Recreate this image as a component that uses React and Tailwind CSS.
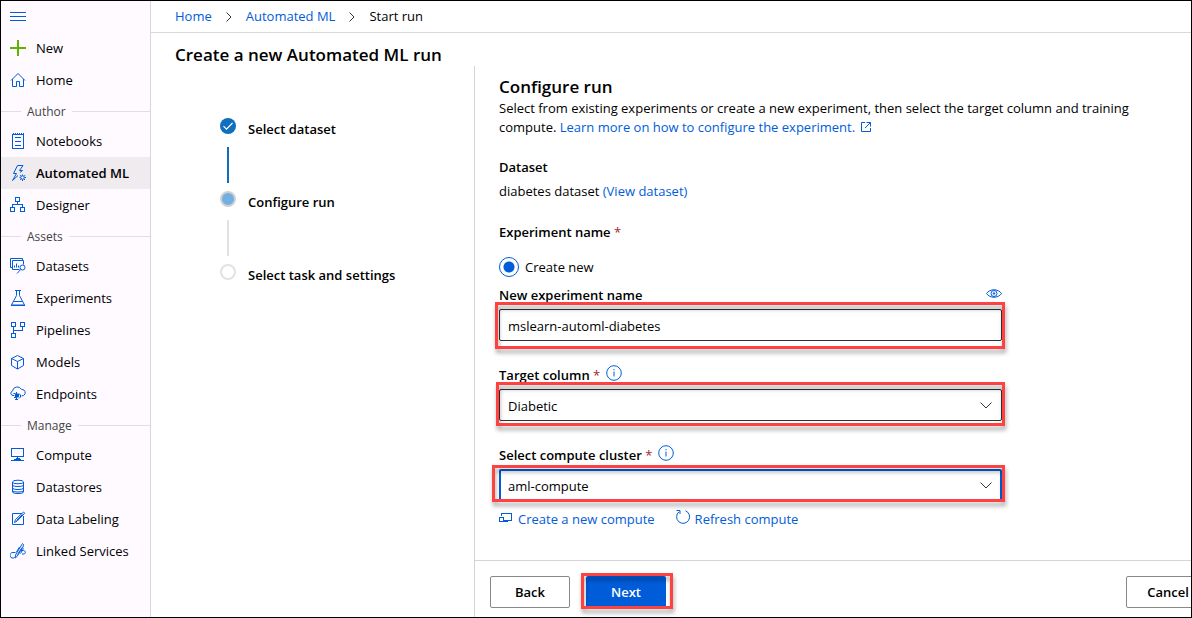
import React from "react";

const icons = {
  plus: <path d="M8 0v16M0 8h16" stroke="#5db300" strokeWidth="2" />,
  home: <path d="M1 8.500 8 1.500l7 7M2.500 7v7.500h4v-5h3v5h4V7" />,
  notebook: (
    <g shapeRendering="crispEdges">
      <path d="M2.500 1.500h11v14h-11z" />
      <path d="M5 4.500h6M5 8.500h6M5 12.500h6M3.500 0v1M5.500 0v1M7.500 0v1M9.500 0v1M11.500 0v1M13.500 0v1" />
    </g>
  ),
  automl: (
    <g>
      <path d="M10 7.500 12.500 5.500H9.500L13 .5H7.500L3.500 8.500H6.500L2.500 15.500 8 10.500" />
      <circle cx="12.500" cy="12.500" r="1.800" />
      <path d="M12.500 9.500v1M12.500 14.500v1.500M9.500 12.500h1M14.500 12.500h1.500M10.200 10.200l1 1M14 14l1 1M15 10.200l-1 1M10.200 15l1-1" />
    </g>
  ),
  designer: (
    <g shapeRendering="crispEdges">
      <path d="M5.500.5h4v4h-4zM.5 10.500h4v4h-4zM10.500 10.500h4v4h-4zM7.500 4.500v3M2.500 10.500v-3h10v3" />
    </g>
  ),
  datasets: (
    <g>
      <path d="M2 9.500H.5v-9h12v2" />
      <path d="M9.500 11.500h-7v-9h11v4" />
      <path d="M4.500 9.500v-2M6.500 9.500v-4M8.500 9.500v-2" />
      <circle cx="12.500" cy="9.500" r="2.500" />
      <path d="M10.700 11.500 7 15.500" />
    </g>
  ),
  flask: <path d="M5 .5h6M6.500.5v5L1.500 15h13L9.500 5.500v-5M3.500 11.500h9M1 15.500h14" />,
  pipelines: (
    <path shapeRendering="crispEdges" d="M1.500.5h4v4h-4zM10.500.5h4v4h-4zM1.500 11.500h4v4h-4zM3.500 4.500v7M3.500 8.500h9v-4" />
  ),
  cube: <path d="M7.500 1.500 13.500 4.500v7l-6 3.500-6-3.500v-7zM1.500 4.500l6 3 6-3M7.500 7.500V15" />,
  cloud: (
    <g>
      <path d="M4.500 9.500H3A2.300 2.300 0 0 1 2.500 5 4.800 4.800 0 0 1 11.500 3.500a3.200 3.200 0 0 1 2 6l-2 .5" />
      <path d="M3.500 7.500h2M4 11.500h2M9 7.500l1.500 1.500v2L9 12.500" />
      <path d="M5.500 8h3v3h-3z" fill="#015cda" />
      <path d="M6.500 6v2M6.500 11v3M5 13.500h3" />
    </g>
  ),
  monitor: (
    <path shapeRendering="crispEdges" d="M1.500 1.500h12v8h-12zM7.500 9.500v2M5.500 11.500h4M1 13.500h3.500v-1h6v1H14M4.500 13.500h6" />
  ),
  database: (
    <g>
      <ellipse cx="8" cy="3" rx="5.500" ry="1.800" />
      <path d="M2.500 3v10c0 2 11 2 11 0V3M2.500 6c0 2 11 2 11 0M2.500 9c0 2 11 2 11 0M2.500 11.500c0 2 11 2 11 0" />
    </g>
  ),
  label: (
    <g>
      <path d="M12 2.500H2.500v11h11V5" />
      <path d="M4.500 11.500l1-3 8-7.500 1.200 1.200-7.700 8zM6.500 9.500l6-6" />
    </g>
  ),
  linked: (
    <g>
      <path d="M5.500 9.500H3a2.800 2.800 0 1 0 1.500 5M11 7.500h2.500c2 0 2.500 3 .5 3.500h-2" />
      <path d="M5 15l1-4 6.500-10.500 1 1L13 4 7 13.500zM7.500 11.500 12 4.500M9.500 4l-3 5M13.500 5.500l-3 5" />
    </g>
  ),
};

function Icon({ name }) {
  return (
    <svg viewBox="0 0 16 16" className="size-4 shrink-0" fill="none" stroke="#015cda" strokeWidth="1" aria-hidden="true">
      {icons[name]}
    </svg>
  );
}

function NavItem({ icon, children, active }) {
  return (
    <a
      href="#"
      aria-current={active ? "page" : undefined}
      className={
        active
          ? "flex h-8 items-center gap-2.5 bg-[#efebef] pl-[9px] font-semibold"
          : "flex h-8 items-center gap-2.5 pl-[9px]"
      }
    >
      <Icon name={icon} />
      <span className="pt-0.5 whitespace-nowrap">{children}</span>
    </a>
  );
}

function NavHeading({ children }) {
  return (
    <div className="flex h-[29px] items-center gap-1.5 pt-0.5 text-xs text-[#444]">
      <span className="h-px w-5 bg-[#e1dde1]" />
      {children}
      <span className="h-px flex-1 bg-[#e1dde1]" />
    </div>
  );
}

function Crumb() {
  return (
    <svg viewBox="0 0 6 10" className="h-2.5 w-1.5" fill="none" stroke="#333" aria-hidden="true">
      <path d="M.5.5 5 5 .5 9.500" />
    </svg>
  );
}

function Info() {
  return (
    <svg viewBox="0 0 16 16" className="size-4" fill="none" stroke="#015cda" aria-hidden="true">
      <circle cx="8" cy="8" r="7.300" />
      <path d="M8 6.500v5M8 4v1.200" />
    </svg>
  );
}

function Required() {
  return <span className="font-normal text-[#a4262c]"> *</span>;
}

function Chevron() {
  return (
    <svg
      viewBox="0 0 12 7"
      className="pointer-events-none absolute top-[13px] right-2.5 h-[7px] w-3"
      fill="none"
      stroke="#333"
      aria-hidden="true"
    >
      <path d="M.5.5 6 6 11.500.5" />
    </svg>
  );
}

function Step({ state, children, last }) {
  return (
    <li className="flex gap-3">
      <div className="flex w-4 flex-col items-center">
        {state === "done" && (
          <svg viewBox="0 0 16 16" className="size-4" aria-hidden="true">
            <circle cx="8" cy="8" r="8" fill="#106ebe" />
            <path d="M3.500 8.200 6.500 11.200 12.500 5" fill="none" stroke="#fff" strokeWidth="1.200" />
          </svg>
        )}
        {state === "current" && <span className="size-4 rounded-full border-2 border-[#d2d0ce] bg-[#71afe5]" />}
        {state === "todo" && <span className="size-4 rounded-full border-2 border-[#e6e1e0]" />}
        {!last && (
          <span
            className={
              state === "done" ? "mt-[13px] mb-2 h-9 w-0.5 bg-[#106ebe]" : "mt-[13px] mb-2 h-9 w-0.5 bg-[#e6e1e0]"
            }
          />
        )}
      </div>
      <span className="pt-px leading-5 font-semibold">{children}</span>
    </li>
  );
}

const mark = "pointer-events-none absolute border-3 border-[#fe4242] drop-shadow-[1px_4px_2px_rgba(0,0,0,0.35)]";

export default function App() {
  return (
    <div className="flex min-h-screen overflow-hidden border border-black bg-white font-['Open_Sans','Noto_Sans',sans-serif] text-[13px] text-black">
      <nav className="w-[150px] shrink-0 border-r border-[#d9d6d9] bg-[#fefaff]" aria-label="Workspace">
        <button className="flex h-[31px] items-center pl-[9px]" aria-label="Toggle menu">
          <svg viewBox="0 0 16 9" className="h-[9px] w-4" stroke="#015cda" shapeRendering="crispEdges" aria-hidden="true">
            <path d="M0 .5h16M0 4.500h16M0 8.500h16" />
          </svg>
        </button>
        <NavItem icon="plus">New</NavItem>
        <NavItem icon="home">Home</NavItem>
        <NavHeading>Author</NavHeading>
        <NavItem icon="notebook">Notebooks</NavItem>
        <NavItem icon="automl" active>Automated ML</NavItem>
        <NavItem icon="designer">Designer</NavItem>
        <NavHeading>Assets</NavHeading>
        <NavItem icon="datasets">Datasets</NavItem>
        <NavItem icon="flask">Experiments</NavItem>
        <NavItem icon="pipelines">Pipelines</NavItem>
        <NavItem icon="cube">Models</NavItem>
        <NavItem icon="cloud">Endpoints</NavItem>
        <NavHeading>Manage</NavHeading>
        <NavItem icon="monitor">Compute</NavItem>
        <NavItem icon="database">Datastores</NavItem>
        <NavItem icon="label">Data Labeling</NavItem>
        <NavItem icon="linked">Linked Services</NavItem>
      </nav>

      <div className="flex min-w-0 flex-1 flex-col">
        <div className="flex h-8 items-center gap-3.5 border-b border-[#d9d9d9] pl-6">
          <a href="#" className="text-[#015cda]">Home</a>
          <Crumb />
          <a href="#" className="text-[#015cda]">Automated ML</a>
          <Crumb />
          <span>Start run</span>
        </div>
        <h1 className="pt-[11px] pl-6 text-[17px] leading-[22px] font-semibold">Create a new Automated ML run</h1>

        <div className="flex flex-1">
          <ol className="w-[323px] shrink-0 pt-[52px] pl-[69px]">
            <Step state="done">Select dataset</Step>
            <Step state="current">Configure run</Step>
            <Step state="todo" last>Select task and settings</Step>
          </ol>

          <div className="flex min-w-0 flex-1 flex-col border-l border-[#d4d4d4]">
            <main className="flex-1 pt-2.5 pr-6 pb-6 pl-6">
              <h2 className="text-[17px] leading-[22px] font-semibold">Configure run</h2>
              <p className="mt-px max-w-[650px] leading-[19px]">
                Select from existing experiments or create a new experiment, then select the target column and training
                compute.{" "}
                <a href="#" className="text-[#015cda]">
                  Learn more on how to configure the experiment.
                  <svg viewBox="0 0 10 10" className="ml-1.5 inline size-2.5 align-baseline" fill="none" stroke="#015cda" aria-hidden="true">
                    <path d="M4 .5H.5v9h9V6M5.500.5h4v4M9.500.5 4 6" />
                  </svg>
                </a>
              </p>

              <h3 className="mt-5 leading-5 font-semibold">Dataset</h3>
              <p className="mt-1 leading-5">
                diabetes dataset <a href="#" className="text-[#015cda]">(View dataset)</a>
              </p>

              <h3 className="mt-[21px] leading-5 font-semibold">Experiment name<Required /></h3>
              <label className="mt-[15px] flex h-5 items-center gap-1.5">
                <input
                  type="radio"
                  name="experiment"
                  defaultChecked
                  className="size-5 appearance-none rounded-full border border-[#015cda] bg-[radial-gradient(circle,#015cda_5px,#fff_6px)]"
                />
                <span className="pt-0.5">Create new</span>
              </label>

              <div className="max-w-[503px]">
                <div className="mt-2 flex items-start justify-between">
                  <label htmlFor="name" className="leading-5 font-semibold">New experiment name</label>
                  <svg viewBox="0 0 16 9" className="mt-1 h-[9px] w-4" fill="none" stroke="#015cda" aria-hidden="true">
                    <path d="M.5 4.500C4-.5 12-.5 15.500 4.500 12 9.500 4 9.500.5 4.500z" />
                    <circle cx="8" cy="4.500" r="3" />
                    <circle cx="8" cy="4.500" r=".8" fill="#015cda" />
                  </svg>
                </div>
                <div className="relative mt-1">
                  <input
                    id="name"
                    type="text"
                    defaultValue="mslearn-automl-diabetes"
                    className="block h-8 w-full rounded-xs border border-[#323130] bg-white px-2 pt-0.5 outline-none"
                  />
                  <span className={`${mark} -top-[7px] -right-[3px] -bottom-2 -left-1`} />
                </div>

                <div className="mt-6 flex items-start gap-1.5">
                  <label htmlFor="target" className="leading-5 font-semibold">Target column<Required /></label>
                  <Info />
                </div>
                <div className="relative mt-1">
                  <select
                    id="target"
                    className="block h-8 w-full appearance-none rounded-xs border border-[#323130] bg-white px-2 pt-[3px] outline-none"
                  >
                    <option>Diabetic</option>
                  </select>
                  <Chevron />
                  <span className={`${mark} -top-[7px] -right-[3px] -bottom-[5px] -left-[3px]`} />
                </div>

                <div className="mt-6 flex items-start gap-1.5">
                  <label htmlFor="cluster" className="leading-5 font-semibold">Select compute cluster<Required /></label>
                  <Info />
                </div>
                <div className="relative mt-1">
                  <select
                    id="cluster"
                    className="block h-8 w-full appearance-none rounded-xs border-2 border-[#015cda] bg-white px-[7px] pt-[3px] outline-none"
                  >
                    <option>aml-compute</option>
                  </select>
                  <Chevron />
                  <span className={`${mark} -top-1 -right-[3px] -bottom-px -left-[7px]`} />
                </div>

                <div className="mt-2 flex items-start gap-5 leading-5 text-[#015cda]">
                  <button className="flex items-start gap-1.5">
                    <svg viewBox="0 0 13 10" className="mt-1 h-2.5 w-[13px]" fill="none" stroke="#015cda" shapeRendering="crispEdges" aria-hidden="true">
                      <path d="M2.500 3V.5h10v7H5M.5 4.500h4v4h-4zM5 8.500h4" />
                    </svg>
                    Create a new compute
                  </button>
                  <button className="flex items-start gap-1">
                    <svg viewBox="0 0 16 16" className="size-4" fill="none" stroke="#015cda" aria-hidden="true">
                      <path d="M10.500 1.800a6.500 6.500 0 1 1-6.500 1M1.500 1.500h3.500v3.500" />
                    </svg>
                    Refresh compute
                  </button>
                </div>
              </div>
            </main>

            <footer className="flex border-t border-[#d4d4d4] pt-[15px] pb-[9px] pl-[15px] font-semibold">
              <button className="h-8 w-20 rounded-xs border border-[#8a8886] bg-white pt-0.5">Back</button>
              <div className="relative ml-4">
                <button className="block h-8 w-20 rounded-xs bg-[#015cda] pt-0.5 text-white">Next</button>
                <span className={`${mark} -top-[3px] -right-[7px] -bottom-px -left-[5px]`} />
              </div>
              <button className="-mr-[15px] ml-auto h-8 w-20 rounded-xs border border-[#8a8886] bg-white pt-0.5 pl-1">Cancel</button>
            </footer>
          </div>
        </div>
      </div>
    </div>
  );
}
